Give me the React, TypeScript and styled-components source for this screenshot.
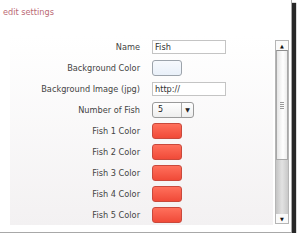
import styled, { createGlobalStyle } from 'styled-components'

const GlobalStyle = createGlobalStyle`
    html, body {
        margin: 0;
        padding: 0;
        background: #ffffff;
    }
    body {
        font-family: "DejaVu Sans", Verdana, sans-serif;
    }
`

const fields = [
    { label: 'Name', kind: 'text', value: 'Fish' },
    { label: 'Background Color', kind: 'color', value: 'light' },
    { label: 'Background Image (jpg)', kind: 'text', value: 'http://' },
    { label: 'Number of Fish', kind: 'select', value: '5' },
    { label: 'Fish 1 Color', kind: 'color', value: 'red' },
    { label: 'Fish 2 Color', kind: 'color', value: 'red' },
    { label: 'Fish 3 Color', kind: 'color', value: 'red' },
    { label: 'Fish 4 Color', kind: 'color', value: 'red' },
    { label: 'Fish 5 Color', kind: 'color', value: 'red' },
]

const App = () => {
    return (
        <>
            <GlobalStyle />
            <Frame>
                <Title>edit settings</Title>
                <Body>
                    <Panel>
                        <Form>
                            {fields.map((f) => (
                                <Row key={f.label}>
                                    <Label>{f.label}</Label>
                                    <Control>
                                        {f.kind === 'text' && <TextBox>{f.value}</TextBox>}
                                        {f.kind === 'color' && <Swatch tone={f.value} />}
                                        {f.kind === 'select' && (
                                            <Select>
                                                <SelectValue>{f.value}</SelectValue>
                                                <SelectArrow>▼</SelectArrow>
                                            </Select>
                                        )}
                                    </Control>
                                </Row>
                            ))}
                        </Form>
                    </Panel>
                    <Scrollbar>
                        <ScrollButton>▲</ScrollButton>
                        <Track>
                            <Thumb>
                                <Grip />
                            </Thumb>
                        </Track>
                        <ScrollButton>▼</ScrollButton>
                    </Scrollbar>
                </Body>
            </Frame>
        </>
    )
}

const Frame = styled.div`
    width: 291px;
    height: 232px;
    background: #ffffff;
    border-right: 1px solid #a8a8a8;
    border-bottom: 1px solid #a8a8a8;
    box-shadow: 4px 3px 1px rgba(15, 15, 15, 0.9);
    display: flex;
    flex-direction: column;
`

const Title = styled.div`
    height: 36px;
    padding: 7px 0 0 3px;
    box-sizing: border-box;
    font-size: 8.2px;
    color: #bb6a74;
`

const Body = styled.div`
    display: flex;
    height: 189px;
    margin-left: 10px;
    margin-right: 2px;
`

const Panel = styled.div`
    flex: 1;
    background: linear-gradient(#ffffff, #f3f1f2);
`

const Form = styled.div`
    display: flex;
    flex-direction: column;
`

const Row = styled.div`
    display: grid;
    grid-template-columns: 130px 1fr;
    column-gap: 12px;
    height: 21px;
    align-items: center;
`

const Label = styled.div`
    text-align: right;
    font-size: 8.2px;
    color: #444444;
    white-space: nowrap;
`

const Control = styled.div`
    display: flex;
    align-items: center;
`

const TextBox = styled.div`
    width: 74px;
    height: 14px;
    box-sizing: border-box;
    border: 1px solid #c4c4c4;
    background: #ffffff;
    font-size: 8.2px;
    color: #333;
    padding-left: 2px;
    line-height: 12px;
`

const Swatch = styled.div<{ tone: string }>`
    width: 30px;
    height: 16px;
    box-sizing: border-box;
    border-radius: 3px;
    border: 1px solid ${(p) => (p.tone === 'red' ? '#c9493c' : '#9ca3ab')};
    background: ${(p) =>
        p.tone === 'red'
            ? 'linear-gradient(#ff705c, #f04a38)'
            : 'linear-gradient(#f6f9fd, #e9f0f9)'};
`

const Select = styled.div`
    width: 42px;
    height: 16px;
    box-sizing: border-box;
    border: 1px solid #9a9a9a;
    border-radius: 3px;
    background: linear-gradient(#ffffff, #eeeeee);
    display: flex;
    align-items: center;
`

const SelectValue = styled.div`
    flex: 1;
    padding-left: 5px;
    font-size: 8px;
    color: #222;
`

const SelectArrow = styled.div`
    width: 11px;
    height: 100%;
    border-left: 1px solid #aaaaaa;
    font-size: 6px;
    color: #222;
    display: flex;
    align-items: center;
    justify-content: center;
`

const Scrollbar = styled.div`
    width: 14px;
    margin: 4px 0 1px 2px;
    box-sizing: border-box;
    border: 1px solid #b5b5b5;
    background: #ffffff;
    display: flex;
    flex-direction: column;
`

const ScrollButton = styled.div`
    height: 9px;
    font-size: 5px;
    color: #111;
    display: flex;
    align-items: center;
    justify-content: center;
    background: #fafafa;
`

const Track = styled.div`
    flex: 1;
    background: linear-gradient(to right, #c4c4c4, #e2e2e2 50%, #c9c9c9);
    display: flex;
    flex-direction: column;
`

const Thumb = styled.div`
    height: 110px;
    box-sizing: border-box;
    border: 1px solid #a8a8a8;
    border-top-color: #8f8f8f;
    background: linear-gradient(to right, #e6e6e6, #ffffff 60%, #ececec);
    display: flex;
    align-items: center;
    justify-content: center;
`

const Grip = styled.div`
    width: 4px;
    height: 7px;
    background: repeating-linear-gradient(#9a9a9a 0 1px, transparent 1px 2px);
`

export default App
